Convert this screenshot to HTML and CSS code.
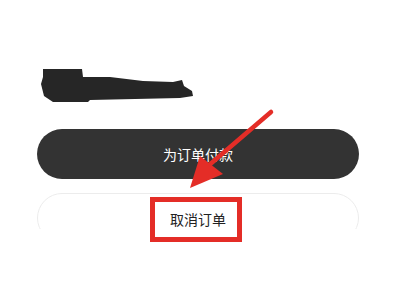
FILE: index.html
```html
<!DOCTYPE html>
<html lang="zh">
<head>
<meta charset="utf-8">
<link rel="stylesheet" href="styles.css">
</head>
<body>
<div class="page">
  <div class="name">
    <svg class="scribble" viewBox="39 66 156 40" width="156" height="40">
      <polygon fill="#262626" points="43,69 82,69 83,77 110,77 143,81 173,82 182,80 184,86 192,91 193,96 180,98 90,100 88,102 53,102 44,96 41,84 43,77"/>
    </svg>
  </div>
  <button class="btn btn-pay">为订单付款</button>
  <div class="clip">
    <button class="btn btn-cancel">取消订单</button>
  </div>
</div>
<svg class="annot" viewBox="0 0 400 300" width="400" height="300">
  <rect x="152.5" y="199.5" width="87" height="40" fill="none" stroke="#e42d27" stroke-width="5"/>
  <line x1="271" y1="112" x2="208" y2="166" stroke="#e42d27" stroke-width="4.5" stroke-linecap="round"/>
  <polygon fill="#e42d27" points="190,188 200,156 223,174"/>
</svg>
</body>
</html>
```
FILE: styles.css
```css
html, body {
  margin: 0;
  padding: 0;
  background: #ffffff;
}
body {
  width: 400px;
  height: 300px;
  overflow: hidden;
  position: relative;
  font-family: "Noto Sans CJK SC", "Noto Sans", sans-serif;
}
.page {
  padding: 0 41px 0 37px;
}
.name {
  box-sizing: border-box;
  height: 129px;
  padding: 66px 0 0 2px;
}
.scribble {
  display: block;
}
.btn {
  display: flex;
  align-items: center;
  justify-content: center;
  width: 100%;
  height: 50px;
  border-radius: 25px;
  font-family: inherit;
  font-size: 14px;
  padding: 0;
}
.btn-pay {
  background: #333333;
  color: #ffffff;
  border: none;
  margin-bottom: 14px;
}
.clip {
  height: 36px;
  overflow: hidden;
}
.btn-cancel {
  background: #ffffff;
  color: #222222;
  border: 1px solid #ececec;
  padding-top: 2px;
}
.annot {
  position: absolute;
  top: 0;
  left: 0;
  pointer-events: none;
}
```
